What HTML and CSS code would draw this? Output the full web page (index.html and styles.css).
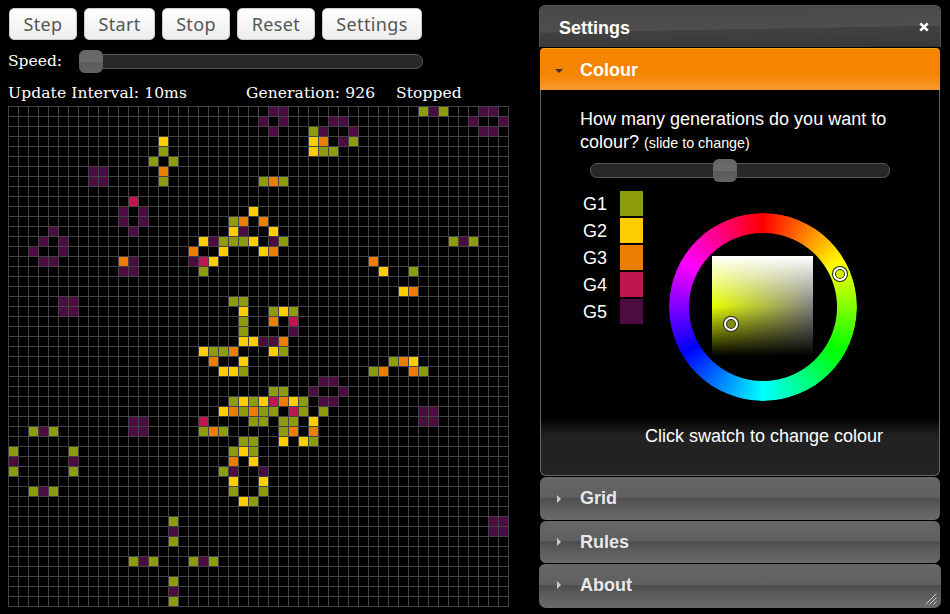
FILE: index.html
```html
<!DOCTYPE html>
<html lang="en">
<head>
<meta charset="utf-8">
<title>Game of Life</title>
<link rel="stylesheet" href="styles.css">
</head>
<body>
<div class="app">
  <main class="game">
    <div class="buttons">
      <button class="btn btn-step">Step</button>
      <button class="btn btn-start">Start</button>
      <button class="btn btn-stop">Stop</button>
      <button class="btn btn-reset">Reset</button>
      <button class="btn btn-settings">Settings</button>
    </div>
    <div class="speed">
      <span class="speed-label">Speed:</span>
      <div class="slider speed-slider"><span class="handle"></span></div>
    </div>
    <div class="status">
      <span class="status-interval">Update Interval: 10ms</span>
      <span class="status-gen">Generation: 926</span>
      <span class="status-state">Stopped</span>
    </div>
    <canvas id="board" class="board" width="501" height="501"></canvas>
  </main>

  <aside class="panel">
    <header class="panel-head">
      <span class="panel-title">Settings</span>
      <svg class="close" width="10" height="10" viewBox="0 0 10 10"><path d="M1.3 1.3 8.7 8.7M8.7 1.3 1.3 8.7" stroke="#fff" stroke-width="2.6" fill="none"/></svg>
    </header>
    <section class="acc-head acc-open">
      <span class="tri-down"></span>
      <span class="acc-title">Colour</span>
    </section>
    <section class="acc-body">
      <p class="question">How many generations do you want to colour? <small>(slide to change)</small></p>
      <div class="slider colour-slider"><span class="handle"></span></div>
      <div class="picker">
        <div class="legend">
          <div class="legend-row"><span class="legend-label">G1</span><span class="swatch g1"></span></div>
          <div class="legend-row"><span class="legend-label">G2</span><span class="swatch g2"></span></div>
          <div class="legend-row"><span class="legend-label">G3</span><span class="swatch g3"></span></div>
          <div class="legend-row"><span class="legend-label">G4</span><span class="swatch g4"></span></div>
          <div class="legend-row"><span class="legend-label">G5</span><span class="swatch g5"></span></div>
        </div>
        <div class="wheel-box">
          <div class="wheel"></div>
          <div class="square"></div>
          <span class="marker marker-hue"></span>
          <span class="marker marker-sl"></span>
        </div>
      </div>
      <p class="hint">Click swatch to change colour</p>
    </section>
    <section class="acc-head acc-closed">
      <span class="tri-right"></span>
      <span class="acc-title">Grid</span>
    </section>
    <section class="acc-head acc-closed acc-mid">
      <span class="tri-right"></span>
      <span class="acc-title">Rules</span>
    </section>
    <section class="acc-head acc-closed acc-last">
      <span class="tri-right"></span>
      <span class="acc-title">About</span>
      <svg class="resize" width="12" height="12" viewBox="0 0 12 12"><path d="M0.5 11.5 11.5 0.5M4.5 11.5 11.5 4.5M8.5 11.5 11.5 8.5" stroke="#ccc" stroke-width="1" fill="none"/></svg>
    </section>
  </aside>
</div>
<script src="app.js"></script>
</body>
</html>
```
FILE: styles.css
```css
* { box-sizing: border-box; }
html, body { margin: 0; height: 100%; background: #000; overflow: hidden; }
.app { display: flex; align-items: flex-start; width: 950px; height: 614px; }

.game { width: 539px; padding: 8px 0 0 8px; flex: none; color: #fff; font-family: "DejaVu Serif", serif; }

.buttons { display: flex; gap: 7px; padding-left: 1px; height: 32px; }
.btn {
  height: 32px; padding: 0; border: 1px solid #ccc; border-radius: 5px;
  background: linear-gradient(#fff, #ededed); color: #555;
  font: 18px "Noto Sans", sans-serif; letter-spacing: 0.35px;
}
.btn-step { width: 68px; }
.btn-start { width: 71px; }
.btn-stop { width: 68px; }
.btn-reset { width: 78px; }
.btn-settings { width: 100px; }

.speed { display: flex; align-items: center; height: 23px; margin-top: 10px; }
.speed-label { width: 72px; font-size: 15.5px; line-height: 23px; }
.slider {
  position: relative; height: 15px; border: 1px solid #555; border-radius: 7px; background: #282828;
}
.handle {
  position: absolute; top: -5px; width: 24px; height: 23px; border-radius: 6px;
  background: linear-gradient(#666 0, #6b6b6b 50%, #5c5c5c 52%, #626262 100%);
}
.speed-slider { width: 343px; margin-bottom: 1px; }
.speed-slider .handle { left: -2px; }

.status { display: flex; height: 22px; margin-top: 9px; font-size: 15.5px; line-height: 22px; letter-spacing: 0.1px; }
.status-interval { width: 238px; }
.status-gen { width: 150px; }

.board { display: block; margin-top: 2px; width: 501px; height: 501px; }

.panel {
  flex: none; width: 402px; padding: 0 1px; margin-top: 5px; height: 603px; position: relative;
  font-family: "Liberation Sans", Arial, sans-serif; color: #fff; font-size: 18px;
}
.panel-head {
  display: flex; align-items: center; justify-content: space-between; height: 42px; padding: 4px 11px 0 19px;
  margin: 0 -1px 1px; border: 1px solid #555; border-bottom: 0; border-radius: 6px 6px 0 0;
  background: linear-gradient(179deg, #484848 0, #4e4e4e 55%, #414141 56%, #3a3a3a 94%, #303030 100%);
}
.panel-title { font-weight: bold; }
.close { margin-bottom: 3px; }

.acc-head { display: flex; align-items: center; position: relative; padding-left: 15px; font-weight: bold; }
.acc-open {
  height: 42px; padding-top: 2px; border-top: 1px solid #f9a321; border-radius: 4px 4px 0 0;
  background: linear-gradient(#f58400 0, #f58400 62%, #f79a31 100%);
}
.acc-open .acc-title { margin-left: 17px; }
.tri-down { width: 0; height: 0; border: 4px solid transparent; border-top: 4.5px solid #333; border-bottom: 0; }
.tri-right { width: 0; height: 0; margin: 0 0 0 2px; border: 4px solid transparent; border-left: 4px solid #ccc; border-right: 0; }
.acc-closed .acc-title { margin-left: 19px; color: #e8e8e8; }

.acc-closed {
  height: 43px; margin-bottom: 1px; border-radius: 6px;
  background: linear-gradient(#676767 0, #5f5f5f 48%, #4d4d4d 49%, #5c5c5c 70%, #6a6a6a 100%);
}
.acc-mid { height: 42px; }
.acc-last { height: 44px; margin: 0 -1px; padding: 0 0 2px 16px; border-radius: 6px 6px 7px 7px; }
.resize { position: absolute; right: 4px; bottom: 3px; }

.acc-body {
  height: 386px; padding: 18px 0 0 39px; margin-bottom: 1px;
  border: 1px solid #666; border-top: 0; border-radius: 0 0 6px 6px;
  background: linear-gradient(#000 0, #000 85%, #222 90%, #232323 100%);
}
.question { margin: 0; width: 330px; line-height: 23px; }
.question small { font-size: 14.3px; }
.colour-slider { width: 300px; margin: 8px 0 0 10px; }
.colour-slider .handle { left: 122px; }

.picker { display: flex; margin: 13px 0 0 3px; }
.legend { display: flex; flex-direction: column; gap: 2px; }
.legend-row { display: flex; align-items: center; height: 25px; }
.legend-label { width: 37px; margin-top: 2px; line-height: 25px; font-size: 18px; }
.swatch { width: 23px; height: 25px; }
.g1 { background: #8d9c0c; }
.g2 { background: #fdcd00; }
.g3 { background: #eb7e00; }
.g4 { background: #bd1650; }
.g5 { background: #4b0c42; }

.wheel-box { position: relative; width: 188px; height: 188px; margin: 22px 0 0 26px; }
.wheel {
  width: 188px; height: 188px; border-radius: 50%;
  background: conic-gradient(#f00, #ff0, #0f0, #0ff, #00f, #f0f, #f00);
  -webkit-mask: radial-gradient(circle, transparent 73.5px, #000 74.5px);
  mask: radial-gradient(circle, transparent 73.5px, #000 74.5px);
}
.square {
  position: absolute; left: 43px; top: 43px; width: 101px; height: 100px;
  background:
    linear-gradient(#fff, rgba(255,255,255,0) 50%, rgba(0,0,0,0) 50%, #000),
    linear-gradient(to right, #e6ff00, #808080);
}
.marker {
  position: absolute; width: 14px; height: 14px; border-radius: 50%;
  border: 2px solid #fff; box-shadow: 0 0 0 1px #222, inset 0 0 0 1px #222;
}
.marker-hue { left: 164px; top: 54px; background: #d5f000; }
.marker-sl { left: 55px; top: 104px; background: #7f8c10; }

.hint { margin: 23px 0 0 65px; line-height: 24px; white-space: nowrap; }
```
FILE: app.js
```js
// Live cells of the board: [row, col, generation colour]
var COLOURS = { 1: "#8d9c0c", 2: "#fdcd00", 3: "#eb7e00", 4: "#bd1650", 5: "#4b0c42" };
var CELLS = {
  0: "26:5 27:5 41:1 42:5 43:1 47:5 48:5",
  1: "25:5 27:5 32:5 33:5 46:5 49:5",
  2: "26:5 30:1 31:5 34:5 47:5 48:5",
  3: "15:2 30:2 31:3 33:5 34:1",
  4: "15:1 30:2 31:1 32:1",
  5: "14:1 16:1",
  6: "8:5 9:5 15:3",
  7: "8:5 9:5 15:1 25:1 26:3 27:1",
  9: "12:4",
  10: "11:5 13:5 24:2",
  11: "11:5 13:5 22:1 23:3 25:3",
  12: "4:5 12:5 22:2 23:5 26:2",
  13: "3:5 5:5 19:2 20:5 21:1 22:1 23:1 24:2 26:5 27:1 44:1 45:5 46:1",
  14: "2:5 5:5 18:3 21:2 25:2 26:3",
  15: "3:5 4:5 11:3 12:5 18:5 19:4 20:2 36:3",
  16: "11:5 12:5 19:1 37:2 40:1",
  18: "39:2 40:3",
  19: "5:5 6:5 22:1 23:1",
  20: "5:5 6:5 23:2 26:1 27:2 28:1",
  21: "23:1 26:3 28:4",
  22: "23:1 28:5",
  23: "23:2 24:2 25:5 26:5 27:3",
  24: "19:2 20:1 21:1 22:3 26:2 27:1",
  25: "20:3 23:2 38:1 39:3 40:2",
  26: "21:2 22:2 23:1 36:1 37:3 40:3 41:1",
  27: "31:5 32:5",
  28: "26:1 27:1 30:5 33:5",
  29: "22:1 23:2 24:1 25:2 26:4 27:3 28:2 29:1 31:5 32:5",
  30: "21:2 22:3 23:1 24:3 25:1 26:1 28:4 29:1 31:1 41:5 42:5",
  31: "12:5 13:5 19:4 24:1 25:1 27:1 28:1 30:2 41:5 42:5",
  32: "2:1 3:5 4:1 12:5 13:5 19:1 20:3 21:1 27:1 28:3 30:3",
  33: "23:1 24:1 27:2 29:2 30:1",
  34: "0:1 6:1 22:1 23:2 24:1",
  35: "0:5 6:5 22:3 24:2",
  36: "0:1 6:1 21:1 22:5 25:5",
  37: "22:2 25:2",
  38: "2:1 3:5 4:1 22:1 25:1",
  39: "23:2 24:1",
  41: "16:1 48:5 49:5",
  42: "16:5 48:5 49:5",
  43: "16:1",
  45: "12:1 13:5 14:1 18:1 19:5 20:1",
  47: "16:1",
  48: "16:5",
  49: "16:1"
};

var ctx = document.getElementById("board").getContext("2d");
ctx.fillStyle = "#000";
ctx.fillRect(0, 0, 501, 501);
ctx.fillStyle = "#444";
for (var i = 0; i <= 50; i++) {
  ctx.fillRect(i * 10, 0, 1, 501);
  ctx.fillRect(0, i * 10, 501, 1);
}
Object.keys(CELLS).forEach(function (row) {
  CELLS[row].split(" ").forEach(function (item) {
    var parts = item.split(":");
    ctx.fillStyle = COLOURS[parts[1]];
    ctx.fillRect(parts[0] * 10 + 1, row * 10 + 1, 9, 9);
  });
});
```
